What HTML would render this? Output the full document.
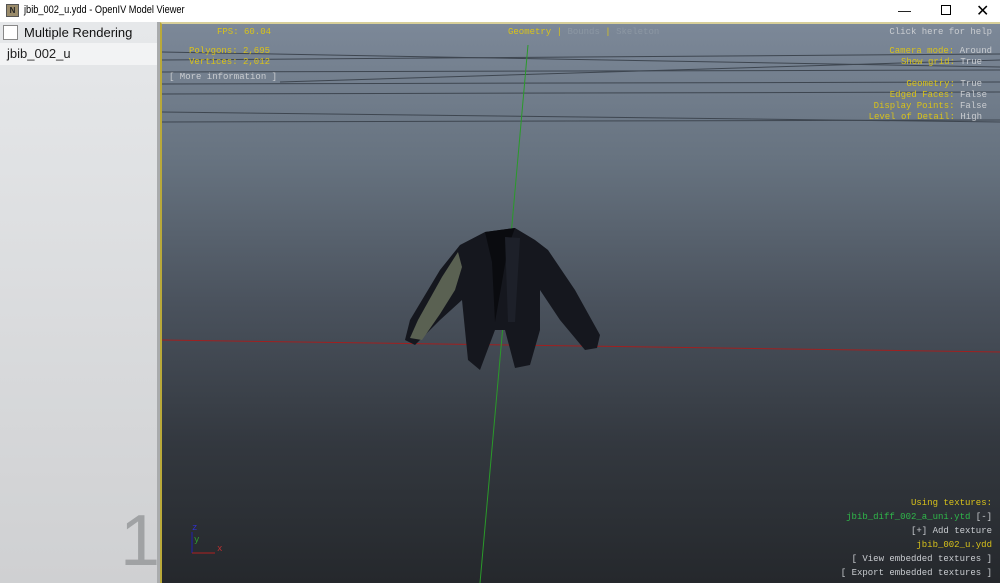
<!DOCTYPE html>
<html><head><style>
*{margin:0;padding:0;box-sizing:border-box}
body{width:1000px;height:583px;overflow:hidden;background:#fff;font-family:"Liberation Sans",sans-serif;position:relative}
.title{position:absolute;left:0;top:0;width:1000px;height:22px;background:#fff;font-size:12px;color:#000}
.left{position:absolute;left:0;top:22px;width:157px;height:561px;background:linear-gradient(#e6e8ea,#cfd0d2)}
.strip{position:absolute;left:157px;top:22px;width:3px;height:561px;background:#a9abad}
.vp{position:absolute;left:160px;top:22px;width:840px;height:561px;background:linear-gradient(#7c8898 0%,#66727f 25%,#4a525d 50%,#33383f 75%,#25282c 100%);border-left:2px solid #b9a93a;border-top:2px solid #d7cf9a;overflow:hidden}
.m{font-family:"Liberation Mono",monospace;font-size:9px;position:absolute;white-space:pre;line-height:11px}
.y{color:#d8c21a}.w{color:#c9ccd0}.g{color:#2fb84a}.d{color:#8c97a3}
.r{text-align:right;right:8px}
</style></head><body>
<div class="title">
<div style="position:absolute;left:6px;top:4px;width:13px;height:13px;background:#9a8b6a;border:1px solid #555;font-size:8px;line-height:11px;text-align:center;font-weight:bold;color:#222">N</div>
<div style="position:absolute;left:24px;top:4px;font-size:11px;transform:scaleX(0.84);transform-origin:left;white-space:nowrap">jbib_002_u.ydd - OpenIV Model Viewer</div>
<div style="position:absolute;left:898px;top:3px;font-size:13px">—</div>
<div style="position:absolute;left:941px;top:5px;width:10px;height:10px;border:1px solid #000"></div>
<div style="position:absolute;left:976px;top:1px;font-size:16px">✕</div>
</div>
<div class="left">
<div style="position:absolute;left:3px;top:3px;width:15px;height:15px;background:#fff;border:1px solid #888"></div>
<div style="position:absolute;left:24px;top:3px;font-size:13px;color:#111">Multiple Rendering</div>
<div style="position:absolute;left:0;top:21px;width:157px;height:22px;background:#f2f3f4"></div>
<div style="position:absolute;left:7px;top:24px;font-size:13px;color:#222">jbib_002_u</div>
<div style="position:absolute;left:120px;top:478px;font-size:72px;color:#a0a2a4;font-weight:300">1</div>
</div>
<div class="strip"></div>
<div class="vp">
<svg width="840" height="561" style="position:absolute;left:-2px;top:-2px">
<g stroke="#3e4650" stroke-width="1" fill="none">
<line x1="0" y1="30" x2="840" y2="45"/><line x1="0" y1="38" x2="840" y2="32"/>
<line x1="0" y1="50" x2="840" y2="48"/><line x1="0" y1="62" x2="840" y2="60"/>
<line x1="0" y1="90" x2="840" y2="100"/><line x1="0" y1="100" x2="840" y2="98"/>
<line x1="0" y1="72" x2="840" y2="70"/><line x1="120" y1="60" x2="840" y2="38"/>
</g>
<line x1="0" y1="318" x2="840" y2="330" stroke="#a02020" stroke-width="1"/>
<line x1="368" y1="23" x2="320" y2="561" stroke="#2a9a2a" stroke-width="1"/>
<g>
<path d="M325 210 L355 206 L375 218 L388 228 L415 268 L440 313 L437 326 L425 328 L400 298 L380 268 L380 308 L370 343 L355 346 L345 308 L335 308 L320 348 L308 338 L302 278 L280 298 L255 323 L245 318 L250 298 L280 248 L300 223 Z" fill="#15171e"/>
<path d="M298 230 L282 255 L258 298 L250 316 L262 318 L280 292 L295 268 L302 245 Z" fill="#5a6152"/>
<path d="M325 210 L355 206 L348 225 L342 260 L335 300 L332 240 Z" fill="#0a0b0f"/>
<path d="M345 215 L360 216 L355 300 L348 300 Z" fill="#1d2029"/>
</g>
<g font-family="Liberation Mono,monospace" font-size="9">
<line x1="32" y1="510" x2="32" y2="531" stroke="#2020b0"/><line x1="32" y1="531" x2="55" y2="531" stroke="#b02020"/>
<text x="32" y="508" fill="#3030d0">z</text><text x="34" y="520" fill="#30a030">y</text><text x="57" y="529" fill="#c03030">x</text>
</g>
</svg>
<div class="m y" style="left:55px;top:3px">FPS: 60.04</div>
<div class="m" style="left:346px;top:3px"><span class="y">Geometry</span> <span class="y">|</span> <span class="d">Bounds</span> <span class="y">|</span> <span class="d">Skeleton</span></div>
<div class="m w r" style="top:3px">Click here for help</div>
<div class="m y" style="left:27px;top:22px">Polygons: 2,695</div>
<div class="m y" style="left:27px;top:33px">Vertices: 2,012</div>
<div class="m w" style="left:7px;top:48px">[ More information ]</div>
<div class="m r" style="top:22px"><span class="y">Camera mode:</span> <span class="w">Around</span></div>
<div class="m r" style="top:33px;right:18px"><span class="y">Show grid:</span> <span class="w">True</span></div>
<div class="m r" style="top:55px;right:18px"><span class="y">Geometry:</span> <span class="w">True</span></div>
<div class="m r" style="top:66px;right:13px"><span class="y">Edged Faces:</span> <span class="w">False</span></div>
<div class="m r" style="top:77px;right:13px"><span class="y">Display Points:</span> <span class="w">False</span></div>
<div class="m r" style="top:88px;right:18px"><span class="y">Level of Detail:</span> <span class="w">High</span></div>
<div class="m y r" style="top:474px">Using textures:</div>
<div class="m r" style="top:488px"><span class="g">jbib_diff_002_a_uni.ytd</span> <span class="w">[-]</span></div>
<div class="m w r" style="top:502px">[+] Add texture</div>
<div class="m y r" style="top:516px">jbib_002_u.ydd</div>
<div class="m w r" style="top:530px">[ View embedded textures ]</div>
<div class="m w r" style="top:544px">[ Export embedded textures ]</div>
</div>
</body></html>
